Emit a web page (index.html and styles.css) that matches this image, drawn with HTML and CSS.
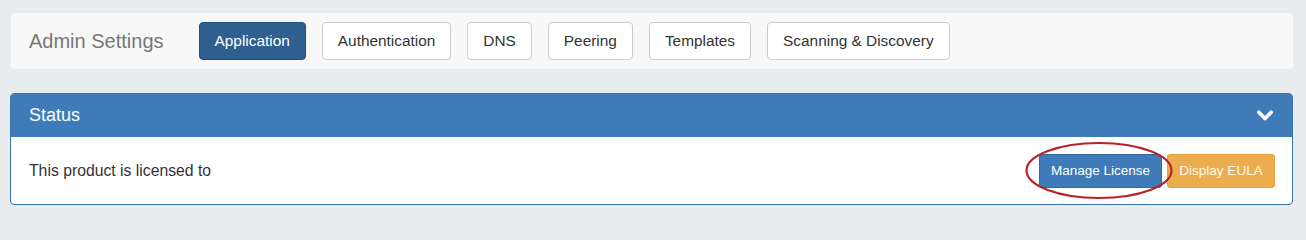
FILE: index.html
```html
<!DOCTYPE html>
<html>
<head>
<meta charset="utf-8">
<link rel="stylesheet" href="styles.css">
</head>
<body>
<div class="page">
  <div class="topbar">
    <span class="title">Admin Settings</span>
    <nav class="tabs">
      <a class="tab active">Application</a>
      <a class="tab">Authentication</a>
      <a class="tab">DNS</a>
      <a class="tab">Peering</a>
      <a class="tab">Templates</a>
      <a class="tab">Scanning &amp; Discovery</a>
    </nav>
  </div>
  <div class="panel">
    <div class="panel-head">
      <span class="panel-title">Status</span>
      <svg class="chev" width="16" height="11" viewBox="0 0 16 11"><path d="M1.8 2.2 L8 8.6 L14.2 2.2" fill="none" stroke="#fff" stroke-width="3.6" stroke-linecap="round" stroke-linejoin="round"/></svg>
    </div>
    <div class="panel-body">
      <span class="lic">This product is licensed to</span>
      <div class="actions">
        <span class="circled">
          <a class="btn btn-blue">Manage License</a>
          <svg class="ring" width="148" height="59" viewBox="0 0 148 59"><ellipse cx="74" cy="29.5" rx="72.5" ry="27.5" fill="none" stroke="#b3242b" stroke-width="2.2"/></svg>
        </span>
        <a class="btn btn-orange">Display EULA</a>
      </div>
    </div>
  </div>
</div>
</body>
</html>
```

FILE: styles.css
```css
html, body {
  margin: 0;
  padding: 0;
}
body {
  background: #e9ecef;
  font-family: "Liberation Sans", Arial, sans-serif;
  color: #333;
}
.page {
  padding: 13px 13px 0 10px;
}
.topbar {
  margin-left: 1px;
  height: 56px;
  background: #f8f8f8;
  border-radius: 4px;
  display: flex;
  align-items: center;
  padding-left: 18px;
}
.title {
  font-size: 20px;
  color: #777;
  margin-right: 35px;
}
.tabs {
  display: flex;
  gap: 16px;
}
.tab {
  box-sizing: border-box;
  height: 38px;
  display: flex;
  align-items: center;
  padding: 0 15px;
  font-size: 15.4px;
  white-space: nowrap;
  color: #333;
  background: #fff;
  border: 1px solid #ccc;
  border-radius: 4px;
}
.tab.active {
  background: #2f5f8e;
  border-color: #24507b;
  color: #fff;
}
.panel {
  margin-top: 24px;
  border: 1px solid #3a72ab;
  border-radius: 4px;
  background: #fff;
}
.panel-head {
  height: 43px;
  background: #3e7bb8;
  border-radius: 3px 3px 0 0;
  display: flex;
  align-items: center;
  justify-content: space-between;
  padding: 0 19px 0 18px;
}
.panel-title {
  font-size: 18px;
  color: #fff;
}
.chev {
  display: block;
}
.panel-body {
  height: 67px;
  display: flex;
  align-items: center;
  justify-content: space-between;
  padding: 0 17px 0 18px;
}
.lic {
  font-size: 15.75px;
  color: #333;
}
.actions {
  display: flex;
  gap: 5px;
}
.circled {
  position: relative;
  display: flex;
}
.ring {
  position: absolute;
  left: -14px;
  top: -13px;
  pointer-events: none;
}
.btn {
  box-sizing: border-box;
  height: 34px;
  display: flex;
  align-items: center;
  justify-content: center;
  padding: 0;
  font-size: 13.5px;
  white-space: nowrap;
  border-radius: 3px;
}
.btn-blue {
  width: 123px;
  background: #3e7bb8;
  border: 1px solid #36699d;
  color: #fff;
}
.btn-orange {
  width: 108px;
  background: #ebad4e;
  border: 1px solid #e6a23c;
  color: #fff8ea;
}
```
